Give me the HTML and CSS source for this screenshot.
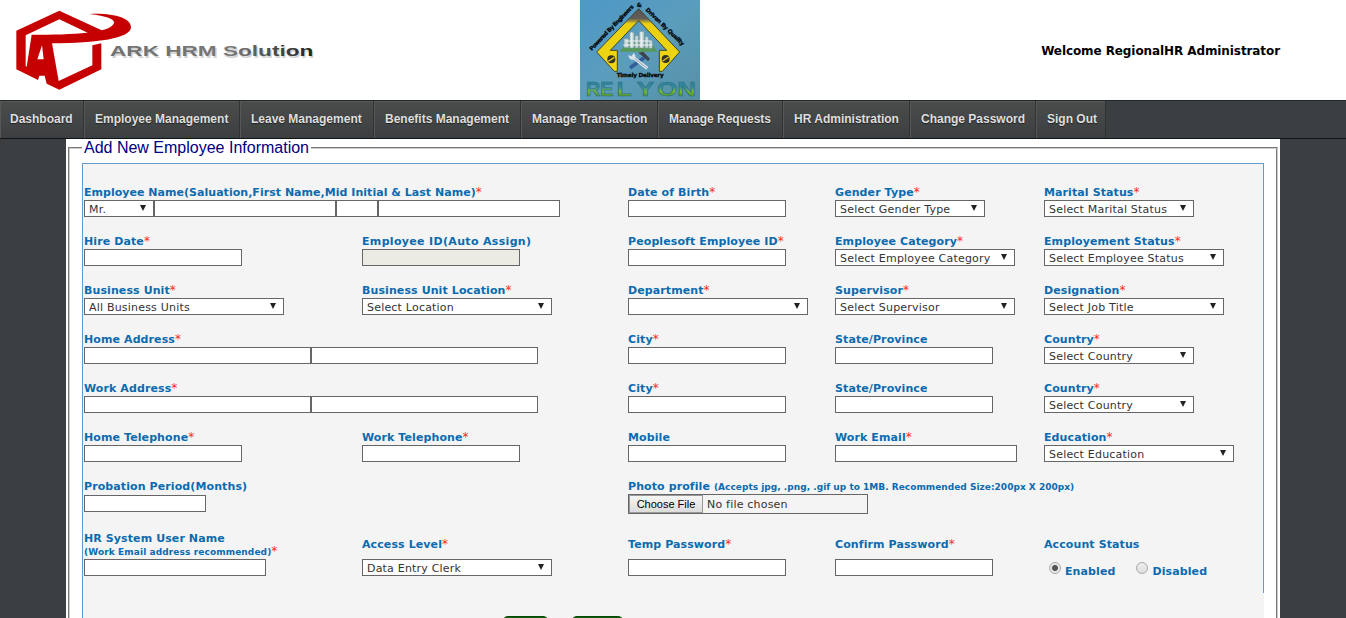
FILE: index.html
```html
<!DOCTYPE html>
<html lang="en">
<head>
<meta charset="utf-8">
<title>ARK HRM Solution</title>
<link rel="stylesheet" href="styles.css">
</head>
<body>
<header class="header">
  <svg class="brand" viewBox="0 0 990 300" role="img" aria-label="ARK HRM Solution">
    <defs>
      <linearGradient id="ink" x1="0" y1="0" x2="1" y2="0"><stop offset="0" stop-color="#707070"/><stop offset=".6" stop-color="#777"/><stop offset="1" stop-color="#222"/></linearGradient>
    </defs>
    <path fill="#c60000" fill-rule="evenodd" d="M178 32L49 92V208L114 240L118 227H134L140 251L178 269L304 208V130L277 136V196L176 243L156 130C290 130 393 115 393 82C393 53 338 38 268 42C320 48 344 58 342 68C339 79 325 86 305 91ZM178 58L263 98C215 103 160 104 95 104L80 200L77 198V106ZM126 136L131 178H112Z"/>
    <text class="brand-text" x="334" y="173" textLength="610" lengthAdjust="spacingAndGlyphs" fill="#d4d4d4">ARK HRM Solution</text>
    <text class="brand-text" x="330" y="169" textLength="610" lengthAdjust="spacingAndGlyphs" fill="url(#ink)">ARK HRM Solution</text>
  </svg>
  <svg class="client" viewBox="30 0 360 300" role="img" aria-label="Relyon">
    <defs>
      <linearGradient id="sky" x1="0" y1="0" x2="1" y2="1"><stop offset="0" stop-color="#4d98c8"/><stop offset=".5" stop-color="#5b9dbc"/><stop offset="1" stop-color="#568fa4"/></linearGradient>
      <linearGradient id="gold" x1="0" y1="0" x2="0" y2="1"><stop offset="0" stop-color="#55565a"/><stop offset=".16" stop-color="#625d55"/><stop offset=".24" stop-color="#e9cf10"/><stop offset="1" stop-color="#f0d812"/></linearGradient>
      <linearGradient id="leaf" gradientUnits="userSpaceOnUse" x1="0" y1="245" x2="0" y2="290"><stop offset="0" stop-color="#2c7fa6"/><stop offset=".4" stop-color="#3a8f98"/><stop offset=".65" stop-color="#7cbc2c"/><stop offset="1" stop-color="#4a8f30"/></linearGradient>
    </defs>
    <rect x="30" width="360" height="300" fill="url(#sky)"/>
    <path d="M206 26L80 156L133 214H142V151H121L206 62L290 151H268V214H277L329 156Z" fill="url(#gold)" stroke="#3d452c" stroke-width="3"/>
    <path d="M170 125H242L262 155H149Z" fill="#569858"/>
    <path d="M162 116h14v27h-14zM179 97h13v47h-13zM195 107h10v37h-10zM208 94h14v50h-14zM225 110h10v34h-10zM237 121h10v24h-10z" fill="#c7d8da" stroke="#77999e" stroke-width="2"/>
    <path d="M160 135h87M166 123h75M185 97v45M214 96v46" stroke="#eef4f2" stroke-width="3"/>
    <path d="M224 172L180 204" stroke="#315d99" stroke-width="11"/>
    <path d="M184 168L232 205" stroke="#d8e2e8" stroke-width="10"/>
    <path d="M184 168L232 205" stroke="#738b9e" stroke-width="2"/>
    <path d="M175 165l12 5 3-12q13 12 0 21q-13 2-15-14z" fill="#d8e2e8"/>
    <path d="M204 158L220 155L240 176L234 184L222 172Z" fill="#3d444d"/>
    <g fill="#343424"><circle cx="124" cy="178" r="12"/><circle cx="287" cy="177" r="12"/></g>
    <path d="M115 184l18-12M278 183l18-12" stroke="#e6cb18" stroke-width="4"/>
    <g class="motto">
      <text transform="translate(65 153) rotate(-46)" textLength="183">Powered By Engineers</text>
      <text x="200" y="22">&amp;</text>
      <text transform="translate(226 31) rotate(44)" textLength="154">Driven By Quality</text>
      <text x="140" y="231" textLength="141">Timely Delivery</text>
    </g>
    <g class="client-name" fill="url(#leaf)">
      <text x="48" y="288" textLength="82" lengthAdjust="spacingAndGlyphs">RE</text>
      <text x="140" y="288" textLength="44" lengthAdjust="spacingAndGlyphs">L</text>
      <text x="200" y="288" textLength="52" lengthAdjust="spacingAndGlyphs">Y</text>
      <text x="262" y="288" textLength="116" lengthAdjust="spacingAndGlyphs">ON</text>
    </g>
  </svg>
  <div class="welcome">Welcome RegionalHR Administrator</div>
</header>

<nav class="nav">
  <a>Dashboard</a><a>Employee Management</a><a>Leave Management</a><a>Benefits Management</a><a>Manage Transaction</a><a>Manage Requests</a><a>HR Administration</a><a>Change Password</a><a>Sign Out</a>
</nav>

<main class="page">
  <fieldset class="frame">
    <legend>Add New Employee Information</legend>
    <form class="panel">
      <div class="row">
        <div class="field wide"><label class="tight">Employee Name(Saluation,First Name,Mid Initial &amp; Last Name)<i>*</i></label>
          <div class="group"><span class="select w70"><select><option>Mr.</option></select></span><input class="w182"><input class="w42"><input class="w182"></div></div>
        <div class="field"><label>Date of Birth<i>*</i></label><input class="w158"></div>
        <div class="field"><label>Gender Type<i>*</i></label><span class="select w150"><select><option>Select Gender Type</option></select></span></div>
        <div class="field"><label>Marital Status<i>*</i></label><span class="select w150"><select><option>Select Marital Status</option></select></span></div>
      </div>
      <div class="row">
        <div class="field"><label>Hire Date<i>*</i></label><input class="w158"></div>
        <div class="field"><label class="loose">Employee ID(Auto Assign)</label><input class="w158 auto" readonly></div>
        <div class="field"><label>Peoplesoft Employee ID<i>*</i></label><input class="w158"></div>
        <div class="field"><label>Employee Category<i>*</i></label><span class="select w180"><select><option>Select Employee Category</option></select></span></div>
        <div class="field"><label>Employement Status<i>*</i></label><span class="select w180"><select><option>Select Employee Status</option></select></span></div>
      </div>
      <div class="row">
        <div class="field"><label>Business Unit<i>*</i></label><span class="select w200"><select><option>All Business Units</option></select></span></div>
        <div class="field"><label>Business Unit Location<i>*</i></label><span class="select w190"><select><option>Select Location</option></select></span></div>
        <div class="field"><label>Department<i>*</i></label><span class="select w180"><select><option></option></select></span></div>
        <div class="field"><label>Supervisor<i>*</i></label><span class="select w180"><select><option>Select Supervisor</option></select></span></div>
        <div class="field"><label>Designation<i>*</i></label><span class="select w180"><select><option>Select Job Title</option></select></span></div>
      </div>
      <div class="row">
        <div class="field wide"><label>Home Address<i>*</i></label><div class="group"><input class="w227"><input class="w227"></div></div>
        <div class="field"><label>City<i>*</i></label><input class="w158"></div>
        <div class="field"><label>State/Province</label><input class="w158"></div>
        <div class="field"><label>Country<i>*</i></label><span class="select w150"><select><option>Select Country</option></select></span></div>
      </div>
      <div class="row">
        <div class="field wide"><label>Work Address<i>*</i></label><div class="group"><input class="w227"><input class="w227"></div></div>
        <div class="field"><label>City<i>*</i></label><input class="w158"></div>
        <div class="field"><label>State/Province</label><input class="w158"></div>
        <div class="field"><label>Country<i>*</i></label><span class="select w150"><select><option>Select Country</option></select></span></div>
      </div>
      <div class="row">
        <div class="field"><label>Home Telephone<i>*</i></label><input class="w158"></div>
        <div class="field"><label>Work Telephone<i>*</i></label><input class="w158"></div>
        <div class="field"><label>Mobile</label><input class="w158"></div>
        <div class="field"><label>Work Email<i>*</i></label><input class="w182"></div>
        <div class="field"><label>Education<i>*</i></label><span class="select w190"><select><option>Select Education</option></select></span></div>
      </div>
      <div class="row photo">
        <div class="field wide probation"><label>Probation Period(Months)</label><input class="w122"></div>
        <div class="field upload"><label>Photo profile <small>(Accepts jpg, .png, .gif up to 1MB. Recommended Size:200px X 200px)</small></label>
          <div class="file"><button type="button">Choose File</button><span>No file chosen</span></div></div>
      </div>
      <div class="row account">
        <div class="field"><label class="two">HR System User Name<br><small>(Work Email address recommended)</small><i>*</i></label><input class="w182"></div>
        <div class="field"><label>Access Level<i>*</i></label><span class="select w190"><select><option>Data Entry Clerk</option></select></span></div>
        <div class="field"><label>Temp Password<i>*</i></label><input class="w158"></div>
        <div class="field"><label>Confirm Password<i>*</i></label><input class="w158"></div>
        <div class="field"><label>Account Status</label>
          <div class="radios"><span class="radio on"></span><b>Enabled</b><span class="radio"></span><b>Disabled</b></div></div>
      </div>
      <div class="actions"><button type="button" class="save"></button><button type="button" class="cancel"></button></div>
    </form>
  </fieldset>
</main>
</body>
</html>
```
FILE: styles.css
```css
* { box-sizing: border-box; }
html, body { height: 618px; overflow: hidden; }
body { margin: 0; background: #3c3f41; font: 11px/15px "DejaVu Sans", sans-serif; }

.header { height: 100px; background: #fff; display: flex; align-items: flex-start; }
.brand { width: 330px; height: 100px; flex: none; }
.brand-text { font: bold 46px "Liberation Sans", sans-serif; }
.client { width: 120px; height: 100px; flex: none; margin-left: 250px; }
.motto { font: bold 17px "DejaVu Sans", sans-serif; fill: #020608; stroke: #020608; stroke-width: .8px; }
.client-name { font: bold 58px "Liberation Sans", sans-serif; stroke: #2d7480; stroke-width: 2px; }
.welcome { margin: 43px 66px 0 auto; font-size: 12px; line-height: 16px; font-weight: bold; letter-spacing: -.09px; color: #000; white-space: nowrap; }

.nav { height: 39px; display: grid; grid-template-columns: 84px 156px 134px 147px 137px 125px 127px 126px 70px; border-top: 1px solid #222628; border-bottom: 1px solid #121415; }
.nav a { display: flex; align-items: center; padding: 0 0 2px 10px; border-left: 1px solid #555857; border-right: 1px solid #303334; background: linear-gradient(#4b4d4c, #3c3f41); box-shadow: inset 0 1px #555857; font: bold 12px/16px "Liberation Sans", Arial, sans-serif; color: #dedede; text-shadow: 0 1px 1px #222; white-space: nowrap; }
.nav a:first-child { padding-left: 9px; }

.page { width: 1214px; height: 479px; margin-left: 66px; background: #fff; overflow: hidden; }
.frame { width: 1210px; height: 520px; margin: 0 2px; padding: 6px 12px 0; border: 2px groove #ccc; }
.frame legend { padding: 0 2px; font: 16px/18px "Liberation Sans", Arial, sans-serif; color: #000080; white-space: nowrap; }
.panel { width: 1182px; height: 500px; padding: 20px 0 0 1px; background: linear-gradient(#6699cc, #6699cc) right top / 1px 429px no-repeat #f4f4f4; border-top: 1px solid #6699cc; border-left: 1px solid #6699cc; }

.row { display: grid; grid-template-columns: 278px 266px 207px 209px 1fr; height: 49px; }
.field { display: flex; flex-direction: column; align-items: flex-start; }
.wide { grid-column: span 2; }
.upload { grid-column: span 3; }
label { height: 16px; padding-top: 1px; line-height: 16px; font-weight: bold; color: #0b6bb0; letter-spacing: .1px; white-space: nowrap; }
.tight { letter-spacing: .03px; }
.loose { letter-spacing: .33px; }
label i { color: #ff2a1a; font-size: 12px; line-height: 10px; font-style: normal; font-weight: normal; }
small { font-size: 9px; letter-spacing: .02px; }
.two small { letter-spacing: .1px; }
.group { display: flex; }
input, .select { height: 17px; margin: 0; padding: 0; border: 1px solid #666; border-radius: 0; background: #fff; }
.auto { background: #ebebe4; }
.select { display: flex; align-items: center; padding-right: 7px; }
select { flex: 1; min-width: 0; height: 15px; padding: 2px 0 0 4px; border: 0; background: none; appearance: none; font: 11px/13px "DejaVu Sans", sans-serif; letter-spacing: .2px; color: #333; }
.select::after { content: ""; border: 3px solid transparent; border-top: 6px solid #222; border-bottom: 0; margin-top: -2px; }
.w42 { width: 42px; } .w70 { width: 70px; } .w122 { width: 122px; } .w150 { width: 150px; }
.w158 { width: 158px; } .w180 { width: 180px; } .w182 { width: 182px; } .w190 { width: 190px; }
.w200 { width: 200px; } .w227 { width: 227px; }

.probation input { margin-top: 1px; }
.file { width: 240px; height: 20px; border: 1px solid #666; display: flex; align-items: center; color: #333; letter-spacing: .2px; }
.file button { width: 74px; height: 18px; padding: 0; border: 1px solid #999; background: linear-gradient(#f6f6f6, #dcdcdc); font: 11px/14px "Liberation Sans", Arial, sans-serif; color: #000; margin-right: 4px; }

.account { height: 80px; padding-top: 4px; }
.account label { height: 23px; padding-top: 6px; }
.account .two { height: 28px; padding-top: 1px; line-height: 13px; }
.account .two + input { margin: 0; }
.account .field > .select, .account label:not(.two) + input { margin-top: 5px; }
.radios { display: flex; align-items: flex-start; height: 20px; margin-top: 9px; padding-left: 5px; color: #0b6bb0; letter-spacing: .1px; }
.radios b { line-height: 17px; }
.radio { width: 12px; height: 12px; margin-right: 4px; margin-top: -1px; border: 1px solid #aaa; border-radius: 50%; background: linear-gradient(#eee, #ddd); }
.radio.on { background: radial-gradient(circle, #555 0 2.6px, #e8e8e8 3.4px); }
.radios b + .radio { margin-left: 21px; }

.actions { display: flex; gap: 22px; padding: 4px 0 0 418px; margin-top: 5px; }
.actions button { height: 24px; padding: 0; background: #145c14; border: 1px solid #034a03; border-radius: 6px; }
.save { width: 47px; }
.cancel { width: 53px; }
```
